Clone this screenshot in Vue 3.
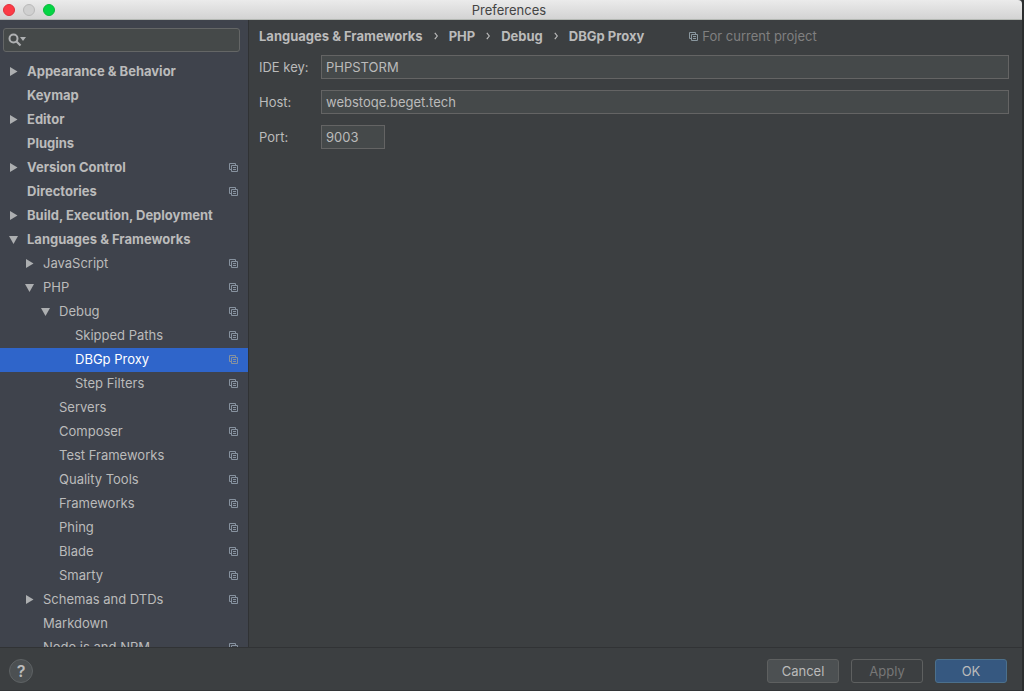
<script setup>
import { ref } from 'vue'

const tree = [
  { name: 'Appearance & Behavior', level: 0, arrow: 'closed' },
  { name: 'Keymap', level: 0 },
  { name: 'Editor', level: 0, arrow: 'closed' },
  { name: 'Plugins', level: 0 },
  { name: 'Version Control', level: 0, arrow: 'closed', project: true },
  { name: 'Directories', level: 0, project: true },
  { name: 'Build, Execution, Deployment', level: 0, arrow: 'closed' },
  { name: 'Languages & Frameworks', level: 0, arrow: 'open' },
  { name: 'JavaScript', level: 1, arrow: 'closed', project: true },
  { name: 'PHP', level: 1, arrow: 'open', project: true },
  { name: 'Debug', level: 2, arrow: 'open', project: true },
  { name: 'Skipped Paths', level: 3, project: true },
  { name: 'DBGp Proxy', level: 3, project: true },
  { name: 'Step Filters', level: 3, project: true },
  { name: 'Servers', level: 2, project: true },
  { name: 'Composer', level: 2, project: true },
  { name: 'Test Frameworks', level: 2, project: true },
  { name: 'Quality Tools', level: 2, project: true },
  { name: 'Frameworks', level: 2, project: true },
  { name: 'Phing', level: 2, project: true },
  { name: 'Blade', level: 2, project: true },
  { name: 'Smarty', level: 2, project: true },
  { name: 'Schemas and DTDs', level: 1, arrow: 'closed', project: true },
  { name: 'Markdown', level: 1 },
  { name: 'Node.js and NPM', level: 1, project: true },
]
const selected = ref('DBGp Proxy')
const crumbs = ['Languages & Frameworks', 'PHP', 'Debug', 'DBGp Proxy']
const query = ref('')
const ideKey = ref('PHPSTORM')
const host = ref('webstoqe.beget.tech')
const port = ref('9003')
</script>

<template>
  <div class="desktop">
    <div class="window">
      <header class="titlebar">
        <div class="lights">
          <button class="light close" aria-label="Close"></button>
          <button class="light minimize" aria-label="Minimize" disabled></button>
          <button class="light expand" aria-label="Zoom"></button>
        </div>
        <h1>Preferences</h1>
      </header>

      <div class="body">
        <aside class="sidebar">
          <label class="search">
            <svg width="20" height="14" viewBox="0 0 20 14" aria-hidden="true">
              <circle cx="5.5" cy="5.5" r="4" fill="none" stroke="#afb1b3" stroke-width="2" />
              <path d="M8.500 8.500L12.500 12.500" stroke="#afb1b3" stroke-width="2.200" />
              <path d="M12 4h6l-3 4z" fill="#afb1b3" />
            </svg>
            <input v-model="query" type="text" aria-label="Search settings" />
          </label>
          <nav class="tree">
            <button
              v-for="item in tree"
              :key="item.name"
              class="row"
              :class="['level-' + item.level, { selected: item.name === selected }]"
              @click="selected = item.name"
            >
              <svg class="arrow" width="10" height="10" viewBox="0 0 10 10" aria-hidden="true">
                <path v-if="item.arrow === 'closed'" d="M1 1v9l7.500-4.500z" fill="#adafb1" />
                <path v-if="item.arrow === 'open'" d="M0 2h9l-4.500 8z" fill="#adafb1" />
              </svg>
              <span class="name">{{ item.name }}</span>
              <svg v-if="item.project" class="project" width="9" height="9" viewBox="0 0 9 9" aria-hidden="true">
                <path d="M2 6.500H.5V.5h6V2M2.500 2.500h6v6h-6zM4 4.500h3M4 6.500h3" fill="none" stroke="currentColor" />
              </svg>
            </button>
          </nav>
        </aside>

        <main class="content">
          <div class="heading">
            <nav class="crumbs">
              <template v-for="(crumb, i) in crumbs" :key="crumb">
                <svg v-if="i" width="4" height="8" viewBox="0 0 4 8" aria-hidden="true">
                  <path d="M.8 .8L3.300 4L.8 7.200" fill="none" stroke="#bbbbbb" stroke-width="1.200" />
                </svg>
                <a href="#">{{ crumb }}</a>
              </template>
            </nav>
            <span class="scope">
              <svg width="9" height="9" viewBox="0 0 9 9" aria-hidden="true">
                <path d="M2 6.500H.5V.5h6V2M2.500 2.500h6v6h-6zM4 4.500h3M4 6.500h3" fill="none" stroke="#8a979f" />
              </svg>
              For current project
            </span>
          </div>
          <form class="form" @submit.prevent>
            <label for="ide-key">IDE key:</label>
            <input id="ide-key" v-model="ideKey" type="text" />
            <label for="host">Host:</label>
            <input id="host" v-model="host" type="text" />
            <label for="port">Port:</label>
            <input id="port" v-model="port" class="short" type="text" />
          </form>
        </main>
      </div>

      <footer class="footer">
        <button class="help" aria-label="Help">?</button>
        <div class="actions">
          <button class="action">Cancel</button>
          <button class="action disabled" disabled>Apply</button>
          <button class="action primary">OK</button>
        </div>
      </footer>
    </div>
  </div>
</template>

<style>
body {
  background: #2b2b2b;
}
</style>

<style scoped>
* {
  box-sizing: border-box;
}
.desktop {
  height: 100vh;
  padding-right: 2px;
  background: #2b2d2e;
  font-family: Inter, "Liberation Sans", sans-serif;
  font-size: 13px;
  color: #bbbbbb;
}
button,
input {
  margin: 0;
  font: inherit;
  color: inherit;
}
.window {
  display: flex;
  flex-direction: column;
  height: 100%;
  overflow: hidden;
  background: #3c3f41;
}
.titlebar {
  display: grid;
  grid-template-columns: 1fr auto 1fr;
  align-items: center;
  flex: none;
  height: 20px;
  padding: 0 7px 0 3px;
  background: linear-gradient(#ebebeb, #d3d3d3);
  border-bottom: 1px solid #b4b8b3;
  border-radius: 0 4px 0 0;
}
.titlebar h1 {
  margin: 0;
  font-size: 13px;
  font-weight: 400;
  line-height: 18px;
  color: #444444;
}
.lights {
  display: flex;
  gap: 8px;
}
.light {
  width: 12px;
  height: 12px;
  padding: 0;
  border: 1px solid;
  border-radius: 50%;
}
.close {
  background: #fc3b46;
  border-color: #e0303b;
}
.minimize {
  background: #d0d0d0;
  border-color: #b9b9b9;
}
.expand {
  background: #04d544;
  border-color: #0bb93c;
}
.body {
  display: flex;
  flex: 1;
  min-height: 0;
}
.sidebar {
  display: flex;
  flex-direction: column;
  flex: none;
  width: 249px;
  background: #3f434c;
  border-right: 1px solid #303234;
}
.search {
  display: flex;
  align-items: center;
  flex: none;
  height: 24px;
  margin: 8px 8px 8px 3px;
  padding-left: 4px;
  background: #454949;
  border: 1px solid #646666;
  border-radius: 3px;
}
.search input {
  flex: 1;
  min-width: 0;
  background: none;
  border: 0;
  outline: 0;
}
.tree {
  flex: 1;
  min-height: 0;
  overflow-y: auto;
  scrollbar-width: none;
}
.row {
  display: flex;
  align-items: center;
  width: 100%;
  height: 24px;
  padding: 0 10px 2px 9px;
  background: none;
  border: 0;
  text-align: left;
  white-space: nowrap;
  color: #bbbbbb;
}
.level-0 {
  font-weight: 700;
}
.level-1 {
  padding-left: 25px;
}
.level-2 {
  padding-left: 41px;
}
.level-3 {
  padding-left: 57px;
}
.arrow {
  flex: none;
  margin-right: 8px;
}
.name {
  flex: 1;
}
.project {
  flex: none;
  color: #87929f;
}
.selected {
  background: #2f65ca;
  color: #ffffff;
}
.content {
  flex: 1;
  min-width: 0;
  padding: 7px 13px 0 10px;
}
.heading {
  display: flex;
  align-items: center;
  gap: 45px;
  height: 18px;
  margin-bottom: 10px;
}
.crumbs {
  display: flex;
  align-items: center;
  gap: 11px;
  font-weight: 700;
}
.crumbs a {
  color: inherit;
  text-decoration: none;
}
.scope {
  display: flex;
  align-items: center;
  gap: 4px;
  color: #808080;
}
.form {
  display: grid;
  grid-template-columns: 52px 1fr;
  align-items: center;
  gap: 11px 10px;
}
.form label {
  white-space: nowrap;
}
.form input {
  width: 100%;
  height: 24px;
  padding: 0 4px;
  background: #45494a;
  border: 1px solid #646464;
  outline: 0;
}
.form .short {
  width: 64px;
}
.footer {
  display: flex;
  align-items: center;
  justify-content: space-between;
  flex: none;
  height: 44px;
  padding: 4px 15px 0 9px;
  border-top: 1px solid #313335;
  border-bottom: 1px solid #333537;
}
.help {
  width: 24px;
  height: 24px;
  padding: 0;
  background: #4c5052;
  border: 1px solid #5e6264;
  border-radius: 50%;
  font-size: 16px;
  font-weight: 600;
  line-height: 20px;
}
.actions {
  display: flex;
  gap: 12px;
}
.action {
  width: 72px;
  height: 24px;
  padding: 0;
  background: #4c5052;
  border: 1px solid #5e6060;
  border-radius: 3px;
}
.disabled {
  background: #3c3f41;
  color: #777777;
}
.primary {
  background: #365880;
  border-color: #4c708c;
}
</style>
